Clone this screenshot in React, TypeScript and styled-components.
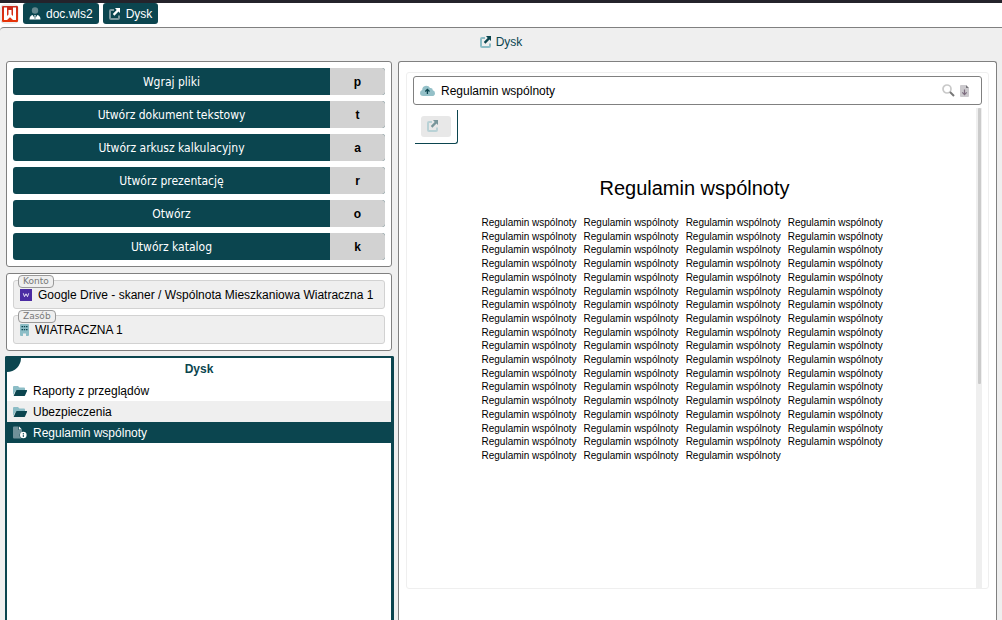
import React from "react";
import styled, { createGlobalStyle, css } from "styled-components";

const teal = "#0b454f";
const page = "#efefef";
const line = "#808080";
const ui = `"Liberation Sans", Arial, sans-serif`;

const GlobalStyle = createGlobalStyle`
  *, *::before, *::after { box-sizing: border-box; }
  body { margin: 0; background: ${page}; color: #000; font: 12px/16px ${ui}; overflow: hidden; }
  button, input { font: inherit; color: inherit; margin: 0; }
`;

const Shell = styled.div`
  display: flex;
  flex-direction: column;
  height: 100vh;
  border-top: 3px solid #24232b;
  background: #fff;
`;

const TabBar = styled.nav`
  display: flex;
  flex: none;
  align-items: center;
  gap: 4px;
  height: 24px;
  padding-bottom: 3px;
`;

const Home = styled.a`
  display: flex;
  width: 19px;
  height: 20px;
`;

const Tab = styled.button`
  display: flex;
  align-items: center;
  gap: 5px;
  height: 21px;
  padding: 0 6px;
  border: 0;
  border-radius: 3px;
  background: ${teal};
  color: #fff;
`;

const Workspace = styled.main`
  display: flex;
  flex: 1;
  flex-direction: column;
  min-height: 0;
  border-top: 1px solid ${line};
  border-top-left-radius: 4px;
  background: ${page};
`;

const PageTitle = styled.h1`
  display: flex;
  flex: none;
  align-items: center;
  justify-content: center;
  gap: 4px;
  height: 33px;
  margin: 0;
  padding-bottom: 5px;
  color: ${teal};
  font-size: 12px;
  font-weight: 400;
`;

const Columns = styled.div`
  display: grid;
  flex: 1;
  grid-template-columns: minmax(0, 389fr) minmax(0, 599fr);
  gap: 4px;
  min-height: 0;
  padding: 0 5px;
`;

const Side = styled.div`
  display: flex;
  flex-direction: column;
  min-height: 0;
`;

const Panel = styled.section`
  display: flex;
  flex: none;
  flex-direction: column;
  gap: 6px;
  margin: 0 2px 0 1px;
  padding: 6px;
  border: 1px solid ${line};
  border-radius: 3px;
  background: #fff;
  & + & { margin-top: 6px; }
`;

const Action = styled.button`
  display: flex;
  align-items: stretch;
  height: 27px;
  padding: 0;
  overflow: hidden;
  border: 0;
  border-radius: 3px;
  background: ${teal};
  color: #fff;
  line-height: 28px;
`;

const ActionLabel = styled.span`
  flex: 1;
  font-family: "DejaVu Sans Condensed", "Noto Sans", sans-serif;
  font-size: 12px;
`;

const ActionKey = styled.kbd`
  width: 55px;
  background: #d2d2d2;
  color: #000;
  font-family: ${ui};
  font-weight: 700;
`;

const Field = styled.div`
  position: relative;
  display: flex;
  align-items: center;
  gap: 6px;
  height: 29px;
  padding: 0 6px;
  border: 1px solid #d2d2d2;
  border-radius: 3px;
  background: ${page};
`;

const FieldLabel = styled.label`
  position: absolute;
  top: -6px;
  left: 4px;
  height: 13px;
  padding: 0 4px;
  border: 1px solid #999;
  border-radius: 4px;
  background: ${page};
  color: #777;
  font: 9px/11px "DejaVu Sans", sans-serif;
`;

const FieldInput = styled.input`
  flex: 1;
  min-width: 0;
  padding: 0;
  border: 0;
  outline: 0;
  background: transparent;
`;

const Files = styled.section`
  position: relative;
  flex: 1;
  min-height: 0;
  margin-top: 5px;
  border: 2px solid ${teal};
  border-right-width: 3px;
  border-bottom: 0;
  border-radius: 2px 2px 0 0;
  background: #fff;
`;

const Corner = styled.span`
  position: absolute;
  top: 0;
  left: 0;
  width: 14px;
  height: 14px;
  border-bottom-right-radius: 14px;
  background: ${teal};
`;

const FilesTitle = styled.h2`
  margin: 0;
  color: ${teal};
  font-size: 12px;
  line-height: 22px;
  text-align: center;
`;

const FileList = styled.ul`
  margin: 0;
  padding: 0;
  list-style: none;
`;

const FileRow = styled.button<{ $tone: "plain" | "stripe" | "active" }>`
  display: flex;
  align-items: center;
  gap: 5px;
  width: 100%;
  height: 21px;
  padding: 0 6px;
  border: 0;
  background: #fff;
  text-align: left;
  ${(p) => p.$tone === "stripe" && css`background: ${page};`}
  ${(p) => p.$tone === "active" && css`background: ${teal}; color: #fff;`}
`;

const Preview = styled.section`
  min-height: 0;
  padding: 10px 7px;
  border: 1px solid ${line};
  border-bottom: 0;
  border-radius: 3px 3px 0 0;
  background: #fff;
`;

const Viewer = styled.article`
  display: flex;
  flex-direction: column;
  gap: 3px;
  padding: 3px 6px 0;
  border: 1px solid ${page};
  border-radius: 3px;
`;

const ViewerHead = styled.header`
  display: flex;
  align-items: center;
  height: 29px;
  padding: 0 12px 0 6px;
  border: 1px solid ${line};
  border-radius: 3px;
`;

const ViewerName = styled.span`
  flex: 1;
  padding-left: 6px;
`;

const IconButton = styled.button`
  display: flex;
  padding: 0;
  border: 0;
  background: none;
  & + & { margin-left: 5px; }
`;

const Scroller = styled.div`
  display: flex;
  align-items: stretch;
`;

const Sheet = styled.div`
  flex: 1;
  min-width: 0;
  padding: 2px 0 126px 2px;
`;

const Tools = styled.div`
  width: 43px;
  padding: 6px;
  border: solid ${teal};
  border-width: 0 1px 1px 0;
  border-bottom-right-radius: 3px;
`;

const OpenButton = styled.button`
  display: flex;
  width: 30px;
  height: 21px;
  padding: 4px 6px;
  border: 0;
  border-radius: 3px;
  background: #e8e8e8;
`;

const DocTitle = styled.h2`
  margin: 32px 2px 17px 0;
  font-size: 20px;
  font-weight: 400;
  line-height: 24px;
  text-align: center;
`;

const DocBody = styled.div`
  display: flex;
  justify-content: center;
  padding-right: 24px;
`;

const DocText = styled.div`
  display: flex;
  flex-direction: column;
  justify-content: space-between;
  width: 404px;
  height: 245px;
`;

const DocLine = styled.p`
  display: flex;
  gap: 7px;
  margin: 0;
  font-size: 10px;
  line-height: 12px;
  white-space: nowrap;
`;

const Track = styled.div`
  width: 6px;
  padding-left: 2px;
  background: ${page};
`;

const Thumb = styled.div`
  width: 3px;
  height: 276px;
  border-radius: 1px;
  background: #cbcbcb;
`;

const LinkIcon = ({ box, arrow, opacity = 1 }: { box: string; arrow: string; opacity?: number }) => (
  <svg width="12" height="12" viewBox="0 0 12 12" opacity={opacity} aria-hidden="true">
    <path d="M5 2H2Q1 2 1 3V10Q1 11 2 11H9Q10 11 10 10V7.5" fill="none" stroke={box} strokeWidth="2" />
    <path d="M6 0H11V5L9.5 3.6L5.4 7.7L3.8 6.1L7.7 2Z" fill={arrow} />
  </svg>
);

const LogoIcon = () => (
  <svg width="19" height="20" viewBox="0 0 19 20" aria-hidden="true">
    <defs>
      <linearGradient id="logo" x2="0" y2="1">
        <stop stopColor="#c92a1e" />
        <stop offset="1" stopColor="#e83508" />
      </linearGradient>
    </defs>
    <rect x="1" y="1" width="17" height="18" rx="3" fill="#fff" stroke="#ddd" />
    <rect x="2" y="2" width="16" height="16" rx="1" fill="url(#logo)" />
    <path d="M4 3.5H7V12L8.5 10.5V6H11.5V10.5L13 12V3.5H16V16H13L10 13.2L7 16H4Z" fill="#fff" />
  </svg>
);

const UserIcon = () => (
  <svg width="12" height="13" viewBox="0 0 12 13" aria-hidden="true">
    <circle cx="6" cy="3.5" r="3.2" fill="#64878e" />
    <path d="M0.5 12.5Q0.5 8.5 3.7 8L6 12L8.3 8Q11.5 8.5 11.5 12.5Z" fill="#fff" />
    <path d="M5 8H7L6.6 9.2L7 11.2L6 12.5L5 11.2L5.4 9.2Z" fill="#b9c8cb" />
  </svg>
);

const WalletIcon = () => (
  <svg width="12" height="12" viewBox="0 0 12 12" aria-hidden="true">
    <rect width="12" height="12" fill="#4b2ba3" />
    <path d="M3.3 4.3L4.5 7.7L6 4.8L7.5 7.7L8.7 4.3" fill="none" stroke="#e6e0f5" strokeWidth="1" />
  </svg>
);

const BuildingIcon = () => (
  <svg width="9" height="12" viewBox="0 0 9 12" aria-hidden="true">
    <path d="M0 1Q0 0 1 0H8Q9 0 9 1V11Q9 12 8 12H6V9.5H3V12H1Q0 12 0 11Z" fill="#8cbdc6" />
    <path d="M1.5 2H3V3.2H1.5ZM3.8 2H5.2V3.2H3.8ZM6 2H7.5V3.2H6ZM1.5 5H3V6.2H1.5ZM3.8 5H5.2V6.2H3.8ZM6 5H7.5V6.2H6Z" fill={teal} />
  </svg>
);

const FolderIcon = () => (
  <svg width="15" height="12" viewBox="0 0 15 12" aria-hidden="true">
    <path d="M0 10V2Q0 1 1 1H5L6.5 2.5H11Q12 2.5 12 3.5V5H4Q3 5 2.5 6Z" fill="#8cbdc6" />
    <path d="M3.8 5H13.6Q14.4 5 14 6L12 10.4Q11.7 11 11 11H0.6L3 5.6Q3.2 5 3.8 5Z" fill={teal} />
  </svg>
);

const FileInfoIcon = () => (
  <svg width="15" height="13" viewBox="0 0 15 13" aria-hidden="true">
    <path d="M0 1.5Q0 0.5 1 0.5H5.5V4H9V6Q6.5 6.5 6.5 9Q6.5 11.5 8.5 12.5H1Q0 12.5 0 11.5Z" fill="#6f9199" />
    <path d="M6 0.5L9 3.5H6Z" fill="#fff" />
    <circle cx="10.3" cy="9" r="3.3" fill="#fff" />
    <path d="M9.8 7H10.8V8H9.8ZM9.8 8.6H10.8V11H9.8Z" fill={teal} />
  </svg>
);

const CloudIcon = () => (
  <svg width="15" height="12" viewBox="0 0 15 12" aria-hidden="true">
    <path d="M3.2 11Q0 11 0 8Q0 5.7 2.2 5Q2.2 1 6 0.7Q9 0.6 10 3Q12.7 2.6 12.8 5.3Q15 6 15 8.2Q15 11 12 11Z" fill="#94c0c8" />
    <path d="M7.4 9V5M5.3 6.5L7.4 4.4L9.5 6.5" fill="none" stroke={teal} strokeWidth="1.3" />
  </svg>
);

const SearchIcon = () => (
  <svg width="13" height="13" viewBox="0 0 13 13" aria-hidden="true">
    <circle cx="5" cy="5" r="4" fill="none" stroke="#c9c9c9" strokeWidth="1.7" />
    <path d="M8 8L12 12" stroke="#777" strokeWidth="2" />
  </svg>
);

const DownloadIcon = () => (
  <svg width="9" height="12" viewBox="0 0 9 12" aria-hidden="true">
    <path d="M0 1Q0 0 1 0H6V3H9V11Q9 12 8 12H1Q0 12 0 11Z" fill="#cbc9cd" />
    <path d="M6 0L9 3H6Z" fill="#77757a" />
    <path d="M4.5 4.5V9.5M2.3 7.4L4.5 9.6L6.7 7.4" fill="none" stroke="#7c6c7e" strokeWidth="1.2" />
  </svg>
);

const actions = [
  ["Wgraj pliki", "p"],
  ["Utwórz dokument tekstowy", "t"],
  ["Utwórz arkusz kalkulacyjny", "a"],
  ["Utwórz prezentację", "r"],
  ["Otwórz", "o"],
  ["Utwórz katalog", "k"],
];

const phrase = "Regulamin wspólnoty";
const docLines: string[][] = Array.from({ length: 18 }, (_, i) => Array(i < 17 ? 4 : 3).fill(phrase));

export default function App() {
  return (
    <>
      <GlobalStyle />
      <Shell>
        <TabBar>
          <Home href="#" aria-label="Start"><LogoIcon /></Home>
          <Tab><UserIcon />doc.wls2</Tab>
          <Tab><LinkIcon box="#7d999f" arrow="#fff" />Dysk</Tab>
        </TabBar>
        <Workspace>
          <PageTitle><LinkIcon box="#8cbdc6" arrow={teal} />Dysk</PageTitle>
          <Columns>
            <Side>
              <Panel>
                {actions.map(([label, key]) => (
                  <Action key={key}>
                    <ActionLabel>{label}</ActionLabel>
                    <ActionKey>{key}</ActionKey>
                  </Action>
                ))}
              </Panel>
              <Panel>
                <Field>
                  <FieldLabel htmlFor="account">Konto</FieldLabel>
                  <WalletIcon />
                  <FieldInput id="account" readOnly value="Google Drive - skaner / Wspólnota Mieszkaniowa Wiatraczna 1" />
                </Field>
                <Field>
                  <FieldLabel htmlFor="resource">Zasób</FieldLabel>
                  <BuildingIcon />
                  <FieldInput id="resource" readOnly value="WIATRACZNA 1" />
                </Field>
              </Panel>
              <Files>
                <Corner />
                <FilesTitle>Dysk</FilesTitle>
                <FileList>
                  <li><FileRow $tone="plain"><FolderIcon />Raporty z przeglądów</FileRow></li>
                  <li><FileRow $tone="stripe"><FolderIcon />Ubezpieczenia</FileRow></li>
                  <li><FileRow $tone="active"><FileInfoIcon />Regulamin wspólnoty</FileRow></li>
                </FileList>
              </Files>
            </Side>
            <Preview>
              <Viewer>
                <ViewerHead>
                  <CloudIcon />
                  <ViewerName>{phrase}</ViewerName>
                  <IconButton aria-label="Szukaj"><SearchIcon /></IconButton>
                  <IconButton aria-label="Pobierz"><DownloadIcon /></IconButton>
                </ViewerHead>
                <Scroller>
                  <Sheet>
                    <Tools>
                      <OpenButton aria-label="Otwórz"><LinkIcon box="#8cbdc6" arrow={teal} opacity={0.5} /></OpenButton>
                    </Tools>
                    <DocTitle>{phrase}</DocTitle>
                    <DocBody>
                      <DocText>
                        {docLines.map((phrases, i) => (
                          <DocLine key={i}>
                            {phrases.map((text, j) => <span key={j}>{text}</span>)}
                          </DocLine>
                        ))}
                      </DocText>
                    </DocBody>
                  </Sheet>
                  <Track><Thumb /></Track>
                </Scroller>
              </Viewer>
            </Preview>
          </Columns>
        </Workspace>
      </Shell>
    </>
  );
}
